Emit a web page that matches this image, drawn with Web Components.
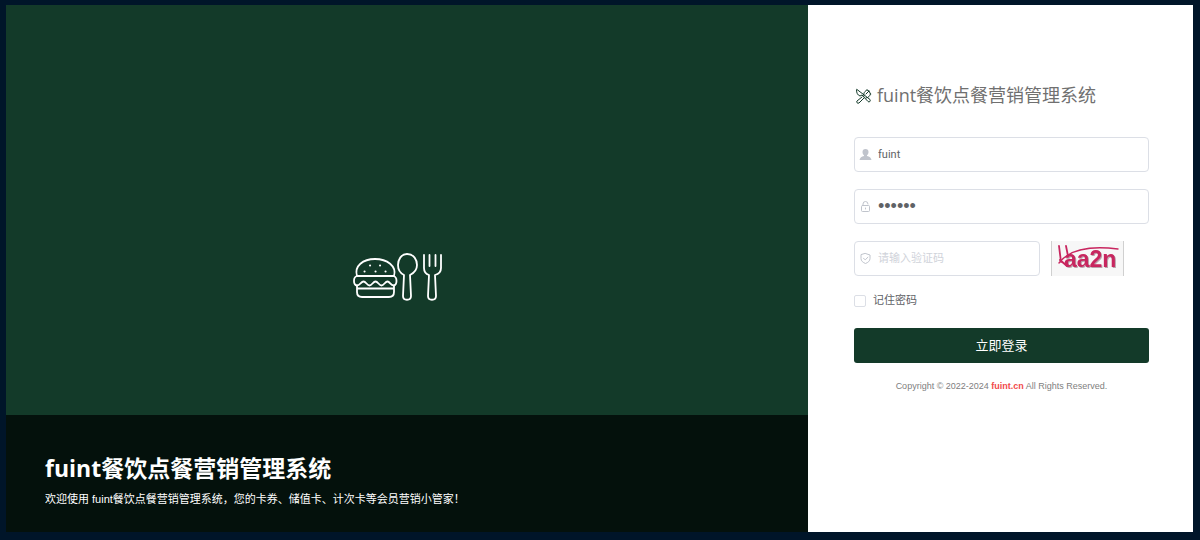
<!DOCTYPE html>
<html lang="zh-CN">
<head>
<meta charset="utf-8">
<meta name="viewport" content="width=device-width, initial-scale=1">
<title>fuint餐饮点餐营销管理系统</title>
<style>
  html { --brand: #133a29; --line: #dcdfe6; --hint: #c0c4cc; --ink: #606266; }
  body { margin: 0; background: #001529; color: var(--ink); font: 11px/16px Roboto, "Noto Sans CJK SC", sans-serif; }
</style>
</head>
<body>
<login-page>
  <brand-hero slot="hero">
    <span slot="title">fuint餐饮点餐营销管理系统</span>
    <span slot="intro">欢迎使用 fuint餐饮点餐营销管理系统，您的卡券、储值卡、计次卡等会员营销小管家！</span>
  </brand-hero>
  <login-form slot="form"></login-form>
</login-page>

<template id="login-page">
  <style>
    :host { display: grid; grid-template-columns: minmax(0, 1fr) 385px; box-sizing: border-box; min-height: 100vh; padding: 5px 7px 8px 6px; }
    @media (max-width: 760px) { :host { grid-template-columns: 1fr; } }
  </style>
  <slot name="hero"></slot>
  <slot name="form"></slot>
</template>

<template id="brand-hero">
  <style>
    :host { display: flex; flex-direction: column; background: var(--brand); color: #fff; }
    .art { flex: 1; display: grid; place-items: center; padding-top: 134px; }
    svg { display: block; margin-right: 16px; }
    footer { background: #04110c; padding: 37px 39px 25px; }
    h1 { margin: 0; font: 700 23px/32px "Open Sans", "Noto Sans CJK SC", sans-serif; }
    p { margin: 7px 0 0; font-family: "Liberation Sans", "Noto Sans CJK SC", sans-serif; }
  </style>
  <div class="art">
    <svg width="92" height="50" viewBox="0 0 92 50" fill="none" stroke="#fff" stroke-width="1.8" stroke-linecap="round" stroke-linejoin="round" aria-hidden="true">
      <path d="M4 24C1 14 10 7 22 7s22 7 19 17z"/>
      <path d="M4 24C0 25 0 33 4 33.500c3 0 4-4 6.500-4s3.500 4 6 4 3.500-4 6-4 3.500 4 6 4 3.500-4 6-4 3 4 6 4c4-.500 4-8.500 0-9.500"/>
      <path d="M4 33.500V40c0 3 2 5 5 5h27c3 0 5-2 5-5v-6.500M4 36.500h37"/>
      <path d="M17 13.500h.1M27 13.500h.1M11.500 19.500h.1M22.500 19.500h.1M32.500 19.500h.1" stroke-width="2"/>
      <path d="M54 2c-6 0-9 6-9 11 0 4 2 8 6 10l-1 21c0 5 8 5 8 0l-1-21c4-2 7-6 7-10 0-5-3-11-10-11z"/>
      <path d="M71 3v13c0 4 2 6 5 7l-1 21c0 5 8 5 8 0l-1-21c4-1 6-3 6-7V3M76.500 3v11M82.500 3v11"/>
    </svg>
  </div>
  <footer>
    <h1><slot name="title"></slot></h1>
    <p><slot name="intro"></slot></p>
  </footer>
</template>

<template id="login-form">
  <style>
    :host { display: block; background: #fff; padding: 76px 44px 24px 46px; }
    h2 { display: flex; align-items: center; gap: 5px; margin: 0 0 27px; font: 400 18px/29px "Open Sans", "Noto Sans CJK SC", sans-serif; color: #707070; }
    h2 svg { flex: none; margin-left: 1px; margin-top: 1px; }
    form { display: flex; flex-direction: column; gap: 17px; }
    .code { display: grid; grid-template-columns: 186px 73px; gap: 11px; }
    .remember { display: flex; align-items: center; gap: 7px; height: 16px; }
    .remember input { appearance: none; box-sizing: border-box; width: 12px; height: 12px; margin: 0; border: 1px solid var(--line); border-radius: 2px; background: #fff; }
    .remember input:checked { background: var(--brand); }
    button { height: 35px; margin-top: 2px; padding: 0; border: 0; border-radius: 3px; background: var(--brand); color: #fff; font: 13px/20px Roboto, "Noto Sans CJK SC", sans-serif; cursor: pointer; }
    .legal { margin: 16px 0 0; text-align: center; font: 9px/14px "Liberation Sans", Arial, sans-serif; color: #808080; }
    a { color: #f14a4a; font-weight: 700; text-decoration: none; }
  </style>
  <h2>
    <svg width="17" height="16" viewBox="0 0 17 16" fill="none" stroke="#133a29" stroke-width="1" stroke-linecap="round" stroke-linejoin="round" aria-hidden="true">
      <path d="M1.500 2c0 3 1 5 3.500 6l2-1 6 6.500c1 1 3 0 2-2L2 1.500zM7 9l-5 4c-1 1 .500 3 2 2l5-5M9 8c-1-3 1-5 3-6M11 10c2 0 4-2 4.500-4M14 3l-3 3M12 2l2 1 1.500 3"/>
    </svg>
    <span>fuint餐饮点餐营销管理系统</span>
  </h2>
  <form onsubmit="return false">
    <icon-field kind="user" type="text" label="账号" value="fuint"></icon-field>
    <icon-field kind="lock" type="password" label="密码" value="123456"></icon-field>
    <div class="code">
      <icon-field kind="shield" type="text" label="验证码" placeholder="请输入验证码"></icon-field>
      <captcha-image></captcha-image>
    </div>
    <label class="remember"><input type="checkbox">记住密码</label>
    <button type="submit">立即登录</button>
  </form>
  <p class="legal">Copyright © 2022-2024 <a href="#">fuint.cn</a> All Rights Reserved.</p>
</template>

<template id="icon-field">
  <style>
    :host { display: flex; align-items: center; box-sizing: border-box; height: 35px; padding: 0 4px; gap: 6px; border: 1px solid var(--line); border-radius: 4px; background: #fff; }
    svg { flex: none; color: var(--hint); }
    input { flex: 1; min-width: 0; width: 0; height: 33px; padding: 0; border: 0; outline: 0; background: none; color: var(--ink); font: inherit; }
    input[type="password"] { font: 18px/33px "Liberation Sans", Arial, sans-serif; }
    input::placeholder { color: #d0d3da; opacity: 1; }
  </style>
  <svg width="13" height="13" viewBox="0 0 13 13" fill="none" stroke="currentColor" stroke-linecap="round" stroke-linejoin="round" aria-hidden="true"></svg>
  <input>
</template>

<template id="captcha-image">
  <style>
    :host { display: block; box-sizing: border-box; height: 35px; border: solid #d0d0d0; border-width: 0 1px; background: #f7f7f7; }
    svg { display: block; width: 100%; height: 100%; }
    text { font: 700 23px "Liberation Sans", sans-serif; filter: drop-shadow(1px 1px 0 #b9a3ac); }
  </style>
  <svg viewBox="0 0 71 35" role="img" aria-label="验证码图片">
    <text x="12" y="26" fill="#c8265f">aa2n</text>
    <g fill="none" stroke="#c8265f" stroke-linecap="round"><path d="M7 5l2 16M14 5l2 10" stroke-width="1.800"/><path d="M7 22C16 10 34 4 66 8" stroke-width="1.400"/><path d="M8 19l7 6" stroke-width="2"/></g>
  </svg>
</template>

<script>
  const stamp = (host, id) => {
    const root = host.attachShadow({ mode: "open" });
    root.append(document.getElementById(id).content.cloneNode(true));
    return root;
  };

  const glyphs = {
    user: '<path d="M6.500 1a3 3 0 0 1 3 3c0 1.500-.700 2.600-1.500 3.200v.800c2.500.500 4 1.500 4.500 4h-12c.500-2.500 2-3.500 4.500-4v-.800C4.200 6.600 3.500 5.500 3.500 4a3 3 0 0 1 3-3z" fill="currentColor" stroke="none"/>',
    lock: '<rect x="2.500" y="5.500" width="8" height="6" rx="1"/><path d="M4 5.500V4a2.500 2.500 0 0 1 5 0M6.500 8v1"/>',
    shield: '<path d="M6.500 1.500l4.500 1.500v3.500c0 2.500-2 4-4.500 5-2.500-1-4.500-2.500-4.500-5V3zM4.500 6.200l1.700 1.700 2.700-2.700"/>'
  };

  customElements.define("icon-field", class extends HTMLElement {
    constructor() {
      super();
      const root = stamp(this, "icon-field");
      this.icon = root.querySelector("svg");
      this.input = root.querySelector("input");
    }
    connectedCallback() {
      this.icon.innerHTML = glyphs[this.getAttribute("kind")];
      this.input.type = this.getAttribute("type");
      this.input.placeholder = this.getAttribute("placeholder") || "";
      this.input.value = this.getAttribute("value") || "";
      this.input.setAttribute("aria-label", this.getAttribute("label"));
    }
  });

  for (const name of ["captcha-image", "login-form", "brand-hero", "login-page"]) {
    customElements.define(name, class extends HTMLElement {
      constructor() { super(); stamp(this, name); }
    });
  }
</script>
</body>
</html>
